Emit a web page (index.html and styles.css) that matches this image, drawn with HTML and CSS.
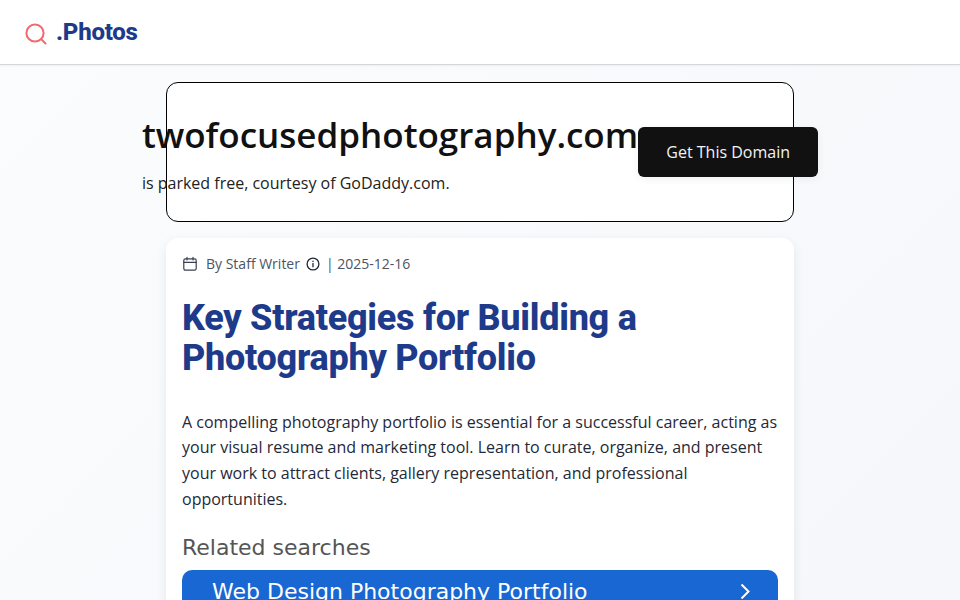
FILE: index.html
```html
<!DOCTYPE html>
<html lang="en">
<head>
    <meta charset="UTF-8">
    <meta name="viewport" content="width=device-width, initial-scale=1.0">
    <title>twofocusedphotography.com</title>
    <link rel="stylesheet" href="styles.css">
</head>
<body>
    <!-- Header -->
    <header class="site-header">
        <svg class="logo-icon" width="24" height="24" viewBox="0 0 24 24" fill="none" stroke="#f0696f" stroke-width="2" stroke-linecap="round">
            <circle cx="11" cy="11" r="8.6"/>
            <path d="M17.4 17.4 L21.5 21.5"/>
        </svg>
        <span class="logo-text">.Photos</span>
    </header>

    <div class="page">
        <!-- Parked domain box -->
        <section class="parked">
            <div class="parked-row">
                <div class="parked-info">
                    <h2 class="domain">twofocusedphotography.com</h2>
                    <p class="courtesy">is parked free, courtesy of GoDaddy.com.</p>
                </div>
                <button class="get-domain">Get This Domain</button>
            </div>
        </section>

        <!-- Article -->
        <article class="card">
            <div class="meta">
                <svg class="meta-calendar" width="16" height="16" viewBox="0 0 16 16" fill="none" stroke="#374151" stroke-width="1.2" stroke-linecap="round">
                    <rect x="1.8" y="2.8" width="12.4" height="11.4" rx="1.6"/>
                    <path d="M1.8 6.4 H14.2 M5 1.4 V4 M11 1.4 V4"/>
                </svg>
                <span>By Staff Writer</span>
                <svg class="meta-info" width="14" height="14" viewBox="0 0 14 14" fill="none" stroke="#1f2937" stroke-width="1.3" stroke-linecap="round">
                    <circle cx="7" cy="7" r="5.9"/>
                    <path d="M7 6.5 V9.8 M7 4.1 V4.4"/>
                </svg>
                <span>| 2025-12-16</span>
            </div>
            <h1 class="title">Key Strategies for Building a Photography Portfolio</h1>
            <p class="summary">A compelling photography portfolio is essential for a successful career, acting as your visual resume and marketing tool. Learn to curate, organize, and present your work to attract clients, gallery representation, and professional opportunities.</p>
            <h3 class="related">Related searches</h3>
            <a class="search-link" href="#">
                <span>Web Design Photography Portfolio</span>
                <svg width="16" height="16" viewBox="0 0 16 16" fill="none" stroke="#fff" stroke-width="2">
                    <path d="M3.5 1.5 L10.5 8.5 L3.5 15.5"/>
                </svg>
            </a>
        </article>
    </div>
</body>
</html>
```

FILE: styles.css
```css
/* General Styles */
html, body {
    height: 100%;
}

body {
    font-family: "Open Sans", sans-serif;
    margin: 0;
    padding: 0;
    background: linear-gradient(135deg, #fbfcfd, #f5f7fb);
    overflow: hidden;
}

/* Header */
.site-header {
    display: flex;
    align-items: center;
    height: 64px;
    padding-left: 24px;
    background-color: #fff;
    border-bottom: 1px solid #d4d6da;
    box-shadow: 0 1px 2px rgba(0, 0, 0, 0.05);
}

.logo-icon {
    margin-top: 3px;
}

.logo-text {
    margin-left: 8px;
    font-family: Roboto, sans-serif;
    font-size: 24px;
    font-weight: 800;
    letter-spacing: -0.01em;
    color: #1e3a8a;
}

/* Page column */
.page {
    width: 628px;
    margin: 0 auto;
    padding-top: 17px;
}

/* Parked box */
.parked {
    display: flex;
    justify-content: center;
    height: 140px;
    box-sizing: border-box;
    background-color: #fff;
    border: 1px solid #000;
    border-radius: 12px;
}

.parked-row {
    display: flex;
    flex-shrink: 0;
    align-items: center;
}

.parked-info {
    flex-shrink: 0;
    padding-top: 4px;
}

.domain {
    margin: 0;
    font-size: 35px;
    font-weight: 600;
    line-height: 44px;
    color: #111;
}

.courtesy {
    margin: 14px 0 0;
    font-size: 16px;
    line-height: 24px;
    color: #222;
}

.get-domain {
    flex-shrink: 0;
    width: 180px;
    height: 50px;
    padding: 0;
    font-family: inherit;
    font-size: 16px;
    color: #f3f3f3;
    background-color: #111;
    border: none;
    border-radius: 6px;
    box-shadow: 0 2px 8px rgba(0, 0, 0, 0.06);
}

/* Article card */
.card {
    margin-top: 16px;
    padding: 16px;
    height: 500px;
    background-color: #fff;
    border-radius: 12px;
    box-shadow: 0 4px 12px rgba(0, 0, 0, 0.08);
}

.meta {
    display: flex;
    align-items: center;
    font-size: 14px;
    line-height: 20px;
    color: #4b5563;
}

.meta-calendar {
    margin-right: 8px;
}

.meta-info {
    margin: 0 6px 0 6px;
}

.title {
    margin: 24px 0 0;
    font-family: Roboto, sans-serif;
    font-size: 36px;
    font-weight: 800;
    line-height: 40px;
    letter-spacing: -0.27px;
    color: #1e3a8a;
}

.summary {
    margin: 31.85px 0 0;
    font-size: 16px;
    line-height: 25.6px;
    color: #1f2937;
}

.related {
    margin: 21.15px 0 0;
    font-family: "DejaVu Sans", sans-serif;
    font-size: 22px;
    font-weight: 400;
    line-height: 30px;
    color: #555;
}

.search-link {
    display: flex;
    align-items: center;
    justify-content: space-between;
    margin-top: 7px;
    height: 42px;
    padding: 0 24px 0 30px;
    font-family: "DejaVu Sans", sans-serif;
    font-size: 22px;
    color: #fff;
    text-decoration: none;
    background-color: #1967d2;
    border-radius: 10px;
}
```
